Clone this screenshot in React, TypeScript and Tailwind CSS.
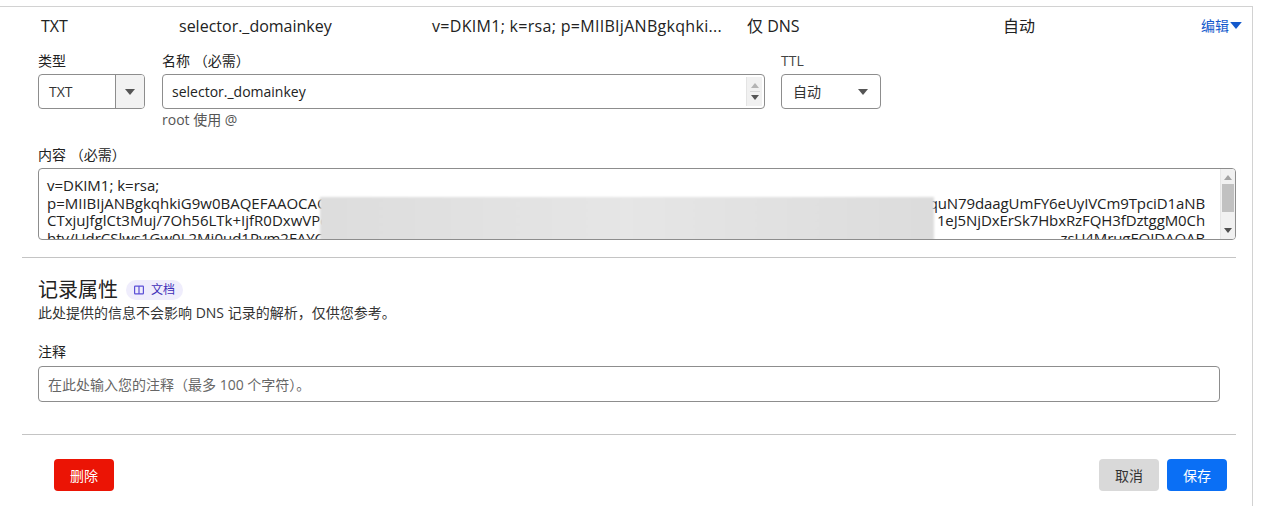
import React from "react";

const font = { fontFamily: '"Open Sans", "Noto Sans CJK SC", sans-serif' };

const contentLines = [
  { left: "v=DKIM1; k=rsa;", right: "" },
  { left: "p=MIIBIjANBgkqhkiG9w0BAQEFAAOCAQ", right: "quN79daagUmFY6eUyIVCm9TpciD1aNB" },
  { left: "CTxjuJfglCt3Muj/7Oh56LTk+IjfR0DxwVPc", right: "1eJ5NjDxErSk7HbxRzFQH3fDztggM0Ch" },
  { left: "htv/UdrCSlws1Gw0L2Mj0ud1Pym2FAYCkq", right: "zsU4MrugEQIDAQAB" },
];

function Caret({ className = "" }: { className?: string }) {
  return (
    <svg width="10" height="6" viewBox="0 0 10 6" className={className}>
      <path d="M0 0h10L5 6z" fill="currentColor" />
    </svg>
  );
}

function Spinner() {
  return (
    <div className="flex h-full w-[16px] flex-col items-center justify-center gap-[3px] bg-[#f1f1f1] border-l border-[#e4e4e4]">
      <svg width="8" height="5" viewBox="0 0 8 5">
        <path d="M0 5h8L4 0z" fill="#b4b4b4" />
      </svg>
      <div className="h-px w-[10px] bg-[#d8d8d8]" />
      <svg width="8" height="5" viewBox="0 0 8 5">
        <path d="M0 0h8L4 5z" fill="#555" />
      </svg>
    </div>
  );
}

export default function App() {
  return (
    <div className="bg-white pt-[6px] h-[506px] text-[#222]" style={font}>
      <div className="w-[1253px] h-[500px] border-t border-r border-[#d2d2d2]">
        {/* summary row */}
        <div className="flex h-[37px] items-center pl-[41px] pr-[10px] text-[16px]">
          <div className="w-[138px]">TXT</div>
          <div className="w-[253px]">selector._domainkey</div>
          <div className="w-[315px] tracking-[0.3px]">v=DKIM1; k=rsa; p=MIIBIjANBgkqhki...</div>
          <div className="w-[256px]">仅 DNS</div>
          <div className="flex-1">自动</div>
          <div className="flex items-center gap-[1px] text-[14px] text-[#1459cc]">
            编辑
            <Caret className="text-[#1459cc] w-[12px] h-[7px]" />
          </div>
        </div>

        <div className="ml-[22px] mr-[16px] px-4">
          {/* type / name / ttl */}
          <div className="flex gap-[16px] pt-[8px]">
            <div className="flex flex-col">
              <label className="text-[14px] leading-[18px] mb-[4px]">类型</label>
              <div className="flex h-[35px] w-[107px] overflow-hidden rounded-[4px] border border-[#8d8d8d]">
                <div className="flex w-[76px] items-center pl-[10px] text-[14px] text-[#333]">TXT</div>
                <div className="flex flex-1 items-center justify-center border-l border-[#8d8d8d] bg-[#f2f2f2] text-[#555]">
                  <Caret />
                </div>
              </div>
            </div>
            <div className="flex flex-col ml-px">
              <label className="text-[14px] leading-[18px] mb-[4px]">名称 （必需）</label>
              <div className="flex h-[35px] w-[603px] items-center rounded-[4px] border border-[#8d8d8d] pl-[9px] pr-[2px]">
                <div className="flex-1 text-[14px]">selector._domainkey</div>
                <div className="h-[29px]">
                  <Spinner />
                </div>
              </div>
              <div className="mt-[2px] text-[14px] leading-[18px] text-[#555]">root 使用 @</div>
            </div>
            <div className="flex flex-col">
              <label className="text-[14px] leading-[18px] mb-[4px] text-[#444]">TTL</label>
              <div className="flex h-[35px] w-[100px] items-center justify-between rounded-[4px] border border-[#8d8d8d] pl-[11px] pr-[12px]">
                <span className="text-[14px] text-[#333]">自动</span>
                <Caret className="text-[#555]" />
              </div>
            </div>
          </div>

          {/* content */}
          <div className="mt-[17px]">
            <label className="block text-[14px] leading-[18px] mb-[4px]">内容 （必需）</label>
            <div className="relative flex h-[72px] w-[1198px] overflow-hidden rounded-[4px] border border-[#8d8d8d]">
              <div className="flex-1 pl-[8px] pr-[15px] pt-[8px] text-[15px] leading-[17.5px] text-[#222]">
                {contentLines.map((l, i) => (
                  <div key={i} className="flex justify-between whitespace-nowrap">
                    <span>{l.left}</span>
                    <span className="tracking-[-0.1px]">{l.right}</span>
                  </div>
                ))}
              </div>
              <div className="flex w-[15px] flex-col items-center bg-[#f1f1f1] border-l border-[#e6e6e6]">
                <svg width="8" height="5" viewBox="0 0 8 5" className="mt-[6px]">
                  <path d="M0 5h8L4 0z" fill="#a3a3a3" />
                </svg>
                <div className="mt-[4px] h-[28px] w-[12px] bg-[#c1c1c1]" />
                <div className="flex-1" />
                <svg width="8" height="5" viewBox="0 0 8 5" className="mb-[6px]">
                  <path d="M0 0h8L4 5z" fill="#505050" />
                </svg>
              </div>
              {/* redacted region */}
              <div className="absolute left-[281px] top-[28px] h-[50px] w-[614px] bg-gradient-to-r from-[#dddddd] via-[#e6e6e6] to-[#dcdcdc] blur-[1px]" />
            </div>
          </div>
        </div>

        <div className="ml-[22px] mr-[16px] mt-[17px] border-t border-[#c4c4c4]" />

        <div className="ml-[22px] mr-[16px] px-4">
          <div className="mt-[19px] flex items-center gap-[8px]">
            <h2 className="text-[20px] leading-[26px] text-[#222]">记录属性</h2>
            <span className="flex h-[20px] items-center gap-[7px] rounded-full bg-[#efedfc] px-[8px] text-[12px] text-[#3f2fb8]">
              <svg width="10" height="10" viewBox="0 0 10 10" fill="none" stroke="#5b4fd6" strokeWidth="1.2">
                <rect x="0.6" y="1.1" width="8.8" height="7.8" rx="0.6" />
                <path d="M5 1.1v7.8" />
              </svg>
              文档
            </span>
          </div>
          <p className="mt-[1px] text-[14px] leading-[18px] text-[#333]">此处提供的信息不会影响 DNS 记录的解析，仅供您参考。</p>

          <label className="mt-[21px] block text-[14px] leading-[18px]">注释</label>
          <div className="mt-[5px] flex h-[36px] w-[1182px] items-center rounded-[4px] border border-[#8d8d8d] pl-[9px] text-[14px] text-[#666]">
            在此处输入您的注释（最多 100 个字符）。
          </div>
        </div>

        <div className="ml-[22px] mr-[16px] mt-[32px] border-t border-[#c4c4c4]" />

        <div className="ml-[22px] mr-[16px] mt-[24px] flex items-center justify-between pl-[32px] pr-[9px]">
          <button className="h-[32px] w-[60px] rounded-[4px] bg-[#eb1405] text-[14px] text-white">删除</button>
          <div className="flex gap-[8px]">
            <button className="h-[32px] w-[60px] rounded-[4px] bg-[#d9d9d9] text-[14px] text-[#333]">取消</button>
            <button className="h-[32px] w-[60px] rounded-[4px] bg-[#0a6ff5] text-[14px] text-white">保存</button>
          </div>
        </div>
      </div>
    </div>
  );
}
